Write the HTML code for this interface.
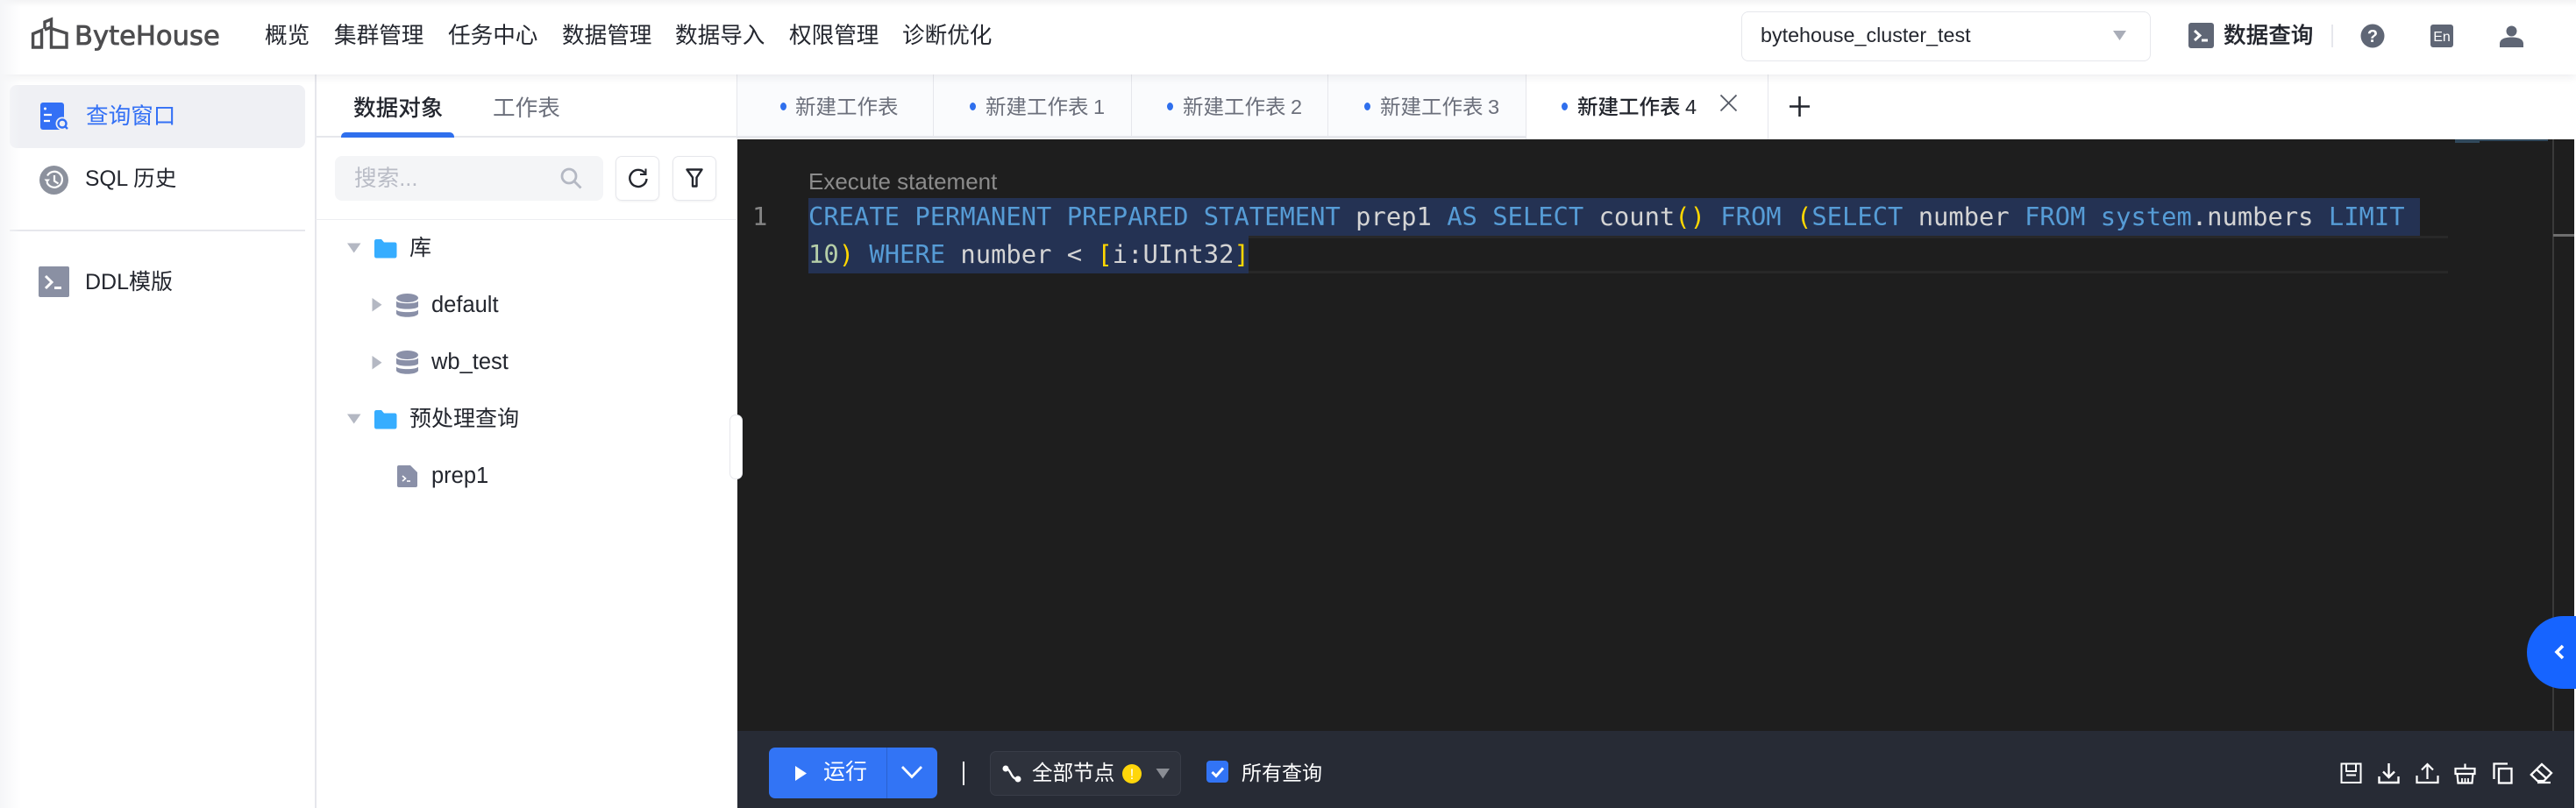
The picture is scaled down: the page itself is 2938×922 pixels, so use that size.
<!DOCTYPE html>
<html lang="zh"><head><meta charset="utf-8"><title>ByteHouse</title>
<style>
html,body{margin:0;padding:0;width:2938px;height:922px;overflow:hidden;background:#fff}
body{position:relative;font-family:"Liberation Sans","Noto Sans CJK SC",sans-serif;color:#23262e}
.a,.t,svg{position:absolute}
.t{white-space:nowrap;height:40px;line-height:40px;font-size:25.6px}
.m{font-family:"DejaVu Sans Mono","Liberation Mono",monospace;font-size:28.8px;height:43px;line-height:43px;white-space:pre;position:absolute;color:#d4d4d4}
.k{color:#569cd6}.y{color:#ffd700}.n{color:#b5cea8}.w{color:#d4d4d4}
.tab{font-size:23.5px;color:#6b6f7b;word-spacing:-1px}
.dot{position:absolute;width:7px;height:9px;border-radius:50%;background:#2f6fed;top:117px}
.b{position:absolute;background:#e6e7ec}
</style></head><body>
<!-- header -->
<div class="a" style="left:0;top:0;width:2938px;height:85px;background:#fff;box-shadow:0 2px 10px rgba(30,35,60,.09);z-index:3"></div>
<div class="a" style="left:0;top:0;width:2938px;height:8px;background:linear-gradient(#f3f3f4,#fff);z-index:3"></div>
<div class="a" style="left:0;top:0;width:24px;height:922px;background:linear-gradient(90deg,#f5f6f8,rgba(255,255,255,0));z-index:4"></div>
<div style="position:absolute;left:0;top:0;width:2938px;height:85px;z-index:5">
<svg style="left:34px;top:18px" width="46" height="40" viewBox="0 0 46 40" fill="none" stroke="#4d4d4f" stroke-width="3.4"><path d="M3.6 36V20.500L13.500 16.500V36Z"/><path d="M17 15V7L24.500 4V13L17 16"/><path d="M24.500 14.500L42 20V36H24.500Z"/></svg>
<div class="t" style="left:85px;top:22px;font-family:'DejaVu Sans',sans-serif;font-size:30.6px;color:#4d4d4f;-webkit-text-stroke:.8px #4d4d4f">ByteHouse</div>
<div class="t" style="left:302px;top:21px">概览</div>
<div class="t" style="left:381px;top:21px">集群管理</div>
<div class="t" style="left:511px;top:21px">任务中心</div>
<div class="t" style="left:641px;top:21px">数据管理</div>
<div class="t" style="left:770px;top:21px">数据导入</div>
<div class="t" style="left:900px;top:21px">权限管理</div>
<div class="t" style="left:1029px;top:21px">诊断优化</div>
<div class="a" style="left:1986px;top:13px;width:465px;height:55px;border:1.500px solid #e6e7ec;border-radius:8px"></div>
<div class="t" style="left:2008px;top:20px;font-size:23.3px">bytehouse_cluster_test</div>
<svg style="left:2409px;top:34px" width="17" height="13"><path d="M1 1H16L8.500 12Z" fill="#a9adb8"/></svg>
<svg style="left:2496px;top:26px" width="29" height="29"><rect width="29" height="29" rx="3" fill="#5f6675"/><path d="M7 9l6 5.500-6 5.500" fill="none" stroke="#fff" stroke-width="3"/><path d="M15 20h7" stroke="#fff" stroke-width="3"/></svg>
<div class="t" style="left:2536px;top:21px;font-size:25.6px;font-weight:500;-webkit-text-stroke:.2px #23262e">数据查询</div>
<div class="b" style="left:2659px;top:28px;width:2px;height:26px"></div>
<svg style="left:2692px;top:27px" width="28" height="28"><circle cx="14" cy="14" r="13.500" fill="#5f6675"/><text x="14" y="21" text-anchor="middle" font-family="Liberation Sans" font-weight="700" font-size="20" fill="#fff">?</text></svg>
<svg style="left:2772px;top:28px" width="26" height="26"><rect width="26" height="26" rx="3" fill="#5f6675"/><text x="13" y="19" text-anchor="middle" font-family="Liberation Sans" font-size="16" fill="#fff">En</text></svg>
<svg style="left:2851px;top:28px" width="27" height="27"><circle cx="13.500" cy="7.500" r="6" fill="#5f6675"/><path d="M0 26V22C0 17 5 14.500 13.500 14.500S27 17 27 22V26Z" fill="#5f6675"/></svg>
</div>
<!-- sidebar -->
<div class="b" style="left:359px;top:85px;width:1.500px;height:837px"></div>
<div class="a" style="left:11px;top:97px;width:337px;height:72px;border-radius:8px;background:#eff0f4"></div>
<svg style="left:46px;top:117px" width="32" height="32"><rect width="27" height="31" rx="3" fill="#3370f5"/><circle cx="5.500" cy="7" r="1.500" fill="#fff"/><path d="M4 14h9M4 21h7" stroke="#fff" stroke-width="2.200"/><circle cx="25" cy="24" r="7.500" fill="#eff0f4"/><circle cx="25" cy="24" r="4.500" fill="none" stroke="#3370f5" stroke-width="2.400"/><path d="M28 27l3 3" stroke="#3370f5" stroke-width="2.400"/></svg>
<div class="t" style="left:98px;top:113px;color:#3370f5">查询窗口</div>
<svg style="left:45px;top:189px" width="33" height="33"><circle cx="16.500" cy="16.500" r="16.500" fill="#8c919d"/><path d="M8.500 19A9 9 0 1 0 9 11.500" fill="none" stroke="#fff" stroke-width="2.200"/><path d="M5.500 15.500h6.500l-3.200 4Z" fill="#fff"/><path d="M17 11v6.500l4.500 3" fill="none" stroke="#fff" stroke-width="2.200"/></svg>
<div class="t" style="left:97px;top:185px;font-size:24.6px">SQL 历史</div>
<div class="b" style="left:11px;top:262px;width:337px;height:2px"></div>
<svg style="left:44px;top:304px" width="35" height="35"><rect width="35" height="35" rx="2" fill="#8a90a3"/><path d="M8 11l7 7-7 7" fill="none" stroke="#fff" stroke-width="3"/><path d="M18 23h8v3h-8z" fill="#fff"/></svg>
<div class="t" style="left:97px;top:302px;font-size:25px">DDL模版</div>
<!-- panel -->
<div class="t" style="left:403px;top:104px;font-weight:500">数据对象</div>
<div class="t" style="left:562px;top:104px;color:#6b6f7b">工作表</div>
<div class="b" style="left:360px;top:155px;width:480px;height:2px"></div>
<div class="a" style="left:389px;top:151px;width:129px;height:6px;background:#2f6fed;border-radius:5px 5px 0 0"></div>
<div class="a" style="left:382px;top:178px;width:306px;height:51px;background:#f4f5f7;border-radius:8px"></div>
<div class="t" style="left:404px;top:184px;color:#b9bcc6">搜索...</div>
<svg style="left:639px;top:191px" width="25" height="25"><circle cx="10" cy="10" r="8" fill="none" stroke="#b4b8c3" stroke-width="2.800"/><path d="M15.500 15.500L23.500 23.500" stroke="#b4b8c3" stroke-width="2.800"/></svg>
<div class="a" style="left:702px;top:178px;width:48px;height:49px;border:1.500px solid #e6e7ec;border-radius:7px;box-shadow:0 1px 2px rgba(0,0,0,.06)"></div>
<div class="a" style="left:767px;top:178px;width:48px;height:49px;border:1.500px solid #e6e7ec;border-radius:7px;box-shadow:0 1px 2px rgba(0,0,0,.06)"></div>
<svg style="left:716px;top:191px" width="24" height="24" fill="none" stroke="#23262e" stroke-width="2.400"><path d="M19.500 6.500A9.600 9.600 0 1 0 21.500 13"/><path d="M20.500 1.500V8H14" stroke-width="2"/></svg>
<svg style="left:782px;top:191px" width="20" height="24" fill="none" stroke="#23262e" stroke-width="2.400"><path d="M1.500 2.500H18.500L12.500 11.500V21.500H8V11.500Z" stroke-linejoin="round"/></svg>
<div class="a" style="left:360px;top:249.500px;width:480px;height:1.500px;background:#edeef1"></div>
<svg style="left:396px;top:277px" width="16" height="12"><path d="M0 .5H15.500L7.700 11.500Z" fill="#b4b8c3"/></svg>
<svg style="left:427px;top:273px" width="26" height="22"><path d="M0 2.500Q0 0 2.500 0H8L11 3.500H23Q25.500 3.500 25.500 6V19Q25.500 21.500 23 21.500H2.500Q0 21.500 0 19Z" fill="#36adff"/></svg>
<div class="t" style="left:467px;top:263px;font-size:25px">库</div>
<svg style="left:424px;top:340px" width="12" height="16"><path d="M.5 0V15.500L11.500 7.700Z" fill="#b4b8c3"/></svg>
<svg style="left:452px;top:335px" width="25" height="27"><ellipse cx="12.500" cy="5" rx="12.500" ry="5" fill="#8a90a8"/><path d="M0 8.500C2 12 23 12 25 8.500V15C23 18.500 2 18.500 0 15ZM0 18.500C2 22 23 22 25 18.500V23C23 28 2 28 0 23Z" fill="#8a90a8"/></svg>
<div class="t" style="left:492px;top:328px;font-size:25.500px">default</div>
<svg style="left:424px;top:406px" width="12" height="16"><path d="M.5 0V15.500L11.500 7.700Z" fill="#b4b8c3"/></svg>
<svg style="left:452px;top:400px" width="25" height="27"><ellipse cx="12.500" cy="5" rx="12.500" ry="5" fill="#8a90a8"/><path d="M0 8.500C2 12 23 12 25 8.500V15C23 18.500 2 18.500 0 15ZM0 18.500C2 22 23 22 25 18.500V23C23 28 2 28 0 23Z" fill="#8a90a8"/></svg>
<div class="t" style="left:492px;top:393px;font-size:25.500px">wb_test</div>
<svg style="left:396px;top:472px" width="16" height="12"><path d="M0 .5H15.500L7.700 11.500Z" fill="#b4b8c3"/></svg>
<svg style="left:427px;top:468px" width="26" height="22"><path d="M0 2.500Q0 0 2.500 0H8L11 3.500H23Q25.500 3.500 25.500 6V19Q25.500 21.500 23 21.500H2.500Q0 21.500 0 19Z" fill="#36adff"/></svg>
<div class="t" style="left:467px;top:458px;font-size:25px">预处理查询</div>
<svg style="left:453px;top:531px" width="23" height="25"><path d="M2 0H15L23 8V23Q23 25 21 25H2Q0 25 0 23V2Q0 0 2 0Z" fill="#8a90a8"/><path d="M6 12l3.500 3-3.500 3" fill="none" stroke="#fff" stroke-width="1.600"/><path d="M11 18h4" stroke="#fff" stroke-width="1.600"/></svg>
<div class="t" style="left:492px;top:523px;font-size:25.500px">prep1</div>
<!-- tabs -->
<div class="a" style="left:840px;top:85px;width:1098px;height:72px;background:#fafbfd"></div>
<div class="b" style="left:840px;top:155px;width:1098px;height:2.500px"></div>
<div class="b" style="left:840px;top:85px;width:1px;height:70px"></div>
<div class="b" style="left:1064px;top:85px;width:1px;height:70px"></div>
<div class="b" style="left:1290px;top:85px;width:1px;height:70px"></div>
<div class="b" style="left:1514px;top:85px;width:1px;height:70px"></div>
<div class="a" style="left:1740px;top:85px;width:275px;height:74px;background:#fff;border-left:1px solid #e6e7ec;border-right:1px solid #e6e7ec"></div>
<div class="dot" style="left:890px"></div><div class="t tab" style="left:907px;top:102px">新建工作表</div>
<div class="dot" style="left:1106px"></div><div class="t tab" style="left:1124px;top:102px">新建工作表 1</div>
<div class="dot" style="left:1331px"></div><div class="t tab" style="left:1349px;top:102px">新建工作表 2</div>
<div class="dot" style="left:1556px"></div><div class="t tab" style="left:1574px;top:102px">新建工作表 3</div>
<div class="dot" style="left:1781px"></div><div class="t tab" style="left:1799px;top:102px;color:#23262e;font-weight:500">新建工作表 4</div>
<svg style="left:1961px;top:107px" width="21" height="21"><path d="M1.500 1.500L19.500 19.500M19.500 1.500L1.500 19.500" stroke="#555a66" stroke-width="1.800"/></svg>
<svg style="left:2040px;top:109px" width="25" height="25"><path d="M12.500 1V24M1 12.500H24" stroke="#23262e" stroke-width="2.600"/></svg>
<!-- editor -->
<div class="a" style="left:841px;top:159px;width:2095px;height:675px;background:#1e1e1e"></div>
<div class="a" style="left:922px;top:269px;width:1870px;height:3px;background:#282828"></div>
<div class="a" style="left:922px;top:309px;width:1870px;height:3px;background:#282828"></div>
<div class="a" style="left:922px;top:226px;width:1838px;height:43px;background:#243253"></div>
<div class="a" style="left:922px;top:269px;width:502px;height:43px;background:#243253"></div>
<div class="t" style="left:922px;top:187px;font-size:26px;color:#8c8c8c">Execute statement</div>
<div class="m" style="left:858px;top:226px;color:#858585">1</div>
<div class="m" style="left:922px;top:226px"><span class="k">CREATE PERMANENT PREPARED STATEMENT</span> prep1 <span class="k">AS SELECT</span> count<span class="y">()</span> <span class="k">FROM</span> <span class="y">(</span><span class="k">SELECT</span> number <span class="k">FROM</span> <span class="k">system</span>.numbers <span class="k">LIMIT</span></div>
<div class="m" style="left:922px;top:269px"><span class="n">10</span><span class="y">)</span> <span class="k">WHERE</span> number &lt; <span class="y">[</span>i:UInt32<span class="y">]</span></div>
<div class="a" style="left:2911px;top:159px;width:1.500px;height:675px;background:#3a3a3a"></div>
<div class="a" style="left:2912px;top:267px;width:24px;height:3px;background:#6e6e6e"></div>
<div class="a" style="left:2800px;top:159px;width:106px;height:2px;background:#4a7fa8;opacity:.45"></div>
<div class="a" style="left:2800px;top:161px;width:28px;height:2px;background:#4a7fa8;opacity:.45"></div>
<!-- handle -->
<div class="a" style="left:832px;top:473px;width:13px;height:72px;background:#fff;border:1px solid #e6e7ec;border-radius:7px"></div>
<!-- blue bubble -->
<div class="a" style="left:2882px;top:703px;width:56px;height:83px;background:#1664ff;border-radius:41.500px 0 0 41.500px"></div>
<svg style="left:2911px;top:734px" width="16" height="20"><path d="M12 3L5 10l7 7" fill="none" stroke="#fff" stroke-width="3.600"/></svg>
<!-- toolbar -->
<div class="a" style="left:841px;top:834px;width:2095px;height:88px;background:#272b35"></div>
<div class="a" style="left:877px;top:853px;width:192px;height:58px;background:#3274f5;border-radius:7px"></div>
<div class="a" style="left:1011px;top:853px;width:1px;height:58px;background:#2a62cf"></div>
<svg style="left:906px;top:873px" width="15" height="19"><path d="M1 1V18L14 9.500Z" fill="#fff"/></svg>
<div class="t" style="left:939px;top:861px;font-size:25px;color:#fff">运行</div>
<svg style="left:1026px;top:872px" width="28" height="18"><path d="M3 3L14 14.500 25 3" fill="none" stroke="#fff" stroke-width="2.800"/></svg>
<div class="a" style="left:1098px;top:869px;width:2px;height:27px;background:#fff"></div>
<div class="a" style="left:1129px;top:857px;width:216px;height:49px;background:#2e323c;border:1px solid #393d48;border-radius:7px"></div>
<svg style="left:1142px;top:872px" width="24" height="22" fill="none"><path d="M5 5C11 5 11 17 18 17" stroke="#fff" stroke-width="2.400"/><circle cx="5" cy="5" r="3.500" fill="#fff"/><circle cx="19" cy="17" r="3.500" fill="#fff"/></svg>
<div class="t" style="left:1177px;top:863px;font-size:23.6px;color:#fff">全部节点</div>
<svg style="left:1279px;top:871px" width="24" height="24"><circle cx="12" cy="12" r="11" fill="#ffd60a"/><text x="12" y="18" text-anchor="middle" font-family="Liberation Sans" font-size="17" fill="#fff">!</text></svg>
<svg style="left:1318px;top:877px" width="17" height="12"><path d="M.5 0H16L8.300 11.500Z" fill="#8a8d94"/></svg>
<div class="a" style="left:1376px;top:868px;width:25px;height:25px;background:#3274f5;border-radius:4px"></div>
<svg style="left:1376px;top:868px" width="25" height="25"><path d="M6.500 13l4.500 4.500 8-9" fill="none" stroke="#fff" stroke-width="3"/></svg>
<div class="t" style="left:1416px;top:862px;font-size:23px;color:#fff">所有查询</div>
<svg style="left:2669px;top:870px" width="25" height="25" fill="none" stroke="#fff" stroke-width="2"><rect x="1.500" y="1.500" width="22" height="21.500"/><path d="M7 2V10H18V2M7 14.500H18"/></svg>
<svg style="left:2712px;top:870px" width="25" height="25" fill="none" stroke="#fff" stroke-width="2.400"><path d="M12.500 1V16M6 10.500l6.500 6.500 6.500-6.500"/><path d="M1.500 16V23H23.500V16"/></svg>
<svg style="left:2755px;top:870px" width="27" height="25" fill="none" stroke="#fff" stroke-width="2.200"><path d="M13.500 19V2M7 8.500l6.500-6.500 6.500 6.500"/><path d="M1.500 15V23H25.500V15"/></svg>
<svg style="left:2799px;top:870px" width="25" height="25" fill="none" stroke="#fff" stroke-width="2.200"><path d="M12.500 1.500V7"/><rect x="1.500" y="7" width="22" height="6"/><path d="M3.500 13L4.500 23.500H20.500L21.500 13"/><path d="M9 18V23M12.500 18V23M16 18V23" stroke-width="1.800"/></svg>
<svg style="left:2843px;top:870px" width="23" height="25" fill="none" stroke="#fff" stroke-width="2.300"><path d="M1.500 19V1.500H17"/><rect x="7" y="7" width="14.500" height="16.500"/></svg>
<svg style="left:2885px;top:870px" width="27" height="25" fill="none" stroke="#fff" stroke-width="2.300"><path d="M14 2L25 12 16.500 21H9L1.800 14Z"/><path d="M8 8L19 18M9 23H24"/></svg>
</body></html>
